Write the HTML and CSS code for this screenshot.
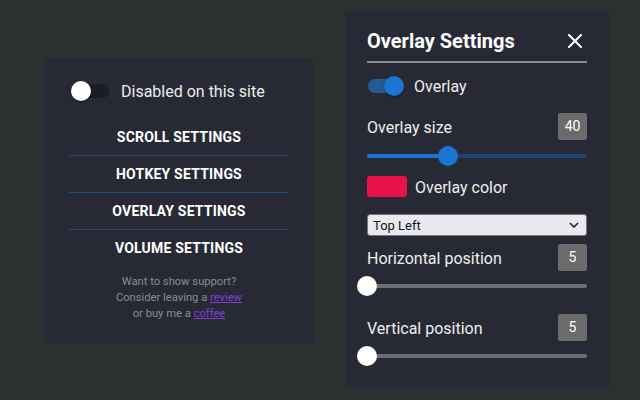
FILE: index.html
```html
<!DOCTYPE html>
<html lang="en">
<head>
    <meta charset="UTF-8">
    <title>Overlay Settings</title>
    <link rel="stylesheet" href="styles.css">
</head>
<body>
    <div class="popup">
        <div class="site-toggle">
            <span class="switch switch-off"><span class="knob"></span></span>
            <span class="site-label">Disabled on this site</span>
        </div>

        <div class="menu">
            <div class="menu-item">SCROLL SETTINGS</div>
            <div class="menu-item">HOTKEY SETTINGS</div>
            <div class="menu-item">OVERLAY SETTINGS</div>
            <div class="menu-item">VOLUME SETTINGS</div>
        </div>

        <p class="support">
            Want to show support?<br>
            Consider leaving a <a href="#">review</a><br>
            or buy me a <a href="#">coffee</a>
        </p>
    </div>

    <div class="settings">
        <div class="settings-head">
            <h2>Overlay Settings</h2>
            <svg class="close" width="14" height="14" viewBox="0 0 14 14">
                <path d="M1 1L13 13M13 1L1 13" stroke="#fff" stroke-width="2" stroke-linecap="square"/>
            </svg>
        </div>

        <div class="row toggle-row">
            <span class="switch switch-on"><span class="knob"></span></span>
            <span class="label">Overlay</span>
        </div>

        <div class="row value-row first">
            <span class="label">Overlay size</span>
            <span class="badge">40</span>
        </div>
        <div class="slider">
            <div class="track blue">
                <div class="fill" style="width: 37%"></div>
                <div class="thumb blue-thumb" style="left: 37%"></div>
            </div>
        </div>

        <div class="row color-row">
            <span class="swatch"></span>
            <span class="label">Overlay color</span>
        </div>

        <div class="select">
            <span>Top Left</span>
            <svg width="10" height="6" viewBox="0 0 10 6">
                <path d="M1 1L5 5L9 1" stroke="#222" stroke-width="1.6" fill="none"/>
            </svg>
        </div>

        <div class="row value-row">
            <span class="label">Horizontal position</span>
            <span class="badge">5</span>
        </div>
        <div class="slider">
            <div class="track grey">
                <div class="thumb" style="left: 0%"></div>
            </div>
        </div>

        <div class="row value-row spaced">
            <span class="label">Vertical position</span>
            <span class="badge">5</span>
        </div>
        <div class="slider">
            <div class="track grey">
                <div class="thumb" style="left: 0%"></div>
            </div>
        </div>
    </div>
</body>
</html>
```

FILE: styles.css
```css
* {
    margin: 0;
    padding: 0;
    box-sizing: border-box;
    font-family: Roboto, "Liberation Sans", sans-serif;
}

body {
    background: #2c3130;
    display: flex;
    align-items: flex-start;
    gap: 32px;
    padding: 11px 0 0 44px;
    height: 400px;
    overflow: hidden;
}

/* left popup */

.popup {
    background: #272a34;
    width: 269px;
    height: 286px;
    margin-top: 47px;
    padding: 21px 24px 0 25px;
}

.site-toggle {
    display: flex;
    align-items: center;
    height: 24px;
    padding-left: 2px;
}

.site-label {
    color: #ececec;
    font-size: 16px;
    margin-left: 12px;
}

.switch {
    position: relative;
    display: inline-block;
    width: 34px;
    height: 14px;
    border-radius: 7px;
}

.switch .knob {
    position: absolute;
    top: -3px;
    width: 20px;
    height: 20px;
    border-radius: 50%;
    box-shadow: 0 1px 2px rgba(0,0,0,0.4);
}

.switch-off {
    background: #1b1d22;
    margin-left: 4px;
}

.switch-off .knob {
    left: -4px;
    background: #fff;
}

.switch-on {
    background: #255a94;
}

.switch-on .knob {
    left: 16px;
    background: #1a76d2;
}

.menu {
    margin-top: 16px;
}

.menu-item {
    height: 37px;
    line-height: 36px;
    text-align: center;
    color: #fff;
    font-size: 14px;
    font-weight: bold;
    letter-spacing: 0.2px;
    border-bottom: 1px solid #1f4e80;
}

.menu-item:last-child {
    border-bottom: none;
}

.support {
    margin-top: 7px;
    text-align: center;
    color: #8a8b90;
    font-size: 11.2px;
    line-height: 16px;
}

.support a {
    color: #7d3ed6;
}

/* right settings panel */

.settings {
    background: #272a34;
    width: 264px;
    height: 377px;
    padding: 18px 22px 0 22px;
}

.settings-head {
    display: flex;
    justify-content: space-between;
    align-items: center;
    height: 24px;
    padding-bottom: 8px;
    border-bottom: 2px solid #8b8c90;
    box-sizing: content-box;
}

.settings-head h2 {
    color: #fff;
    font-size: 20px;
    font-weight: bold;
}

.close {
    margin-right: 5px;
}

.row {
    display: flex;
    align-items: center;
}

.label {
    color: #eeeeee;
    font-size: 16px;
    padding-top: 1px;
}

.toggle-row {
    height: 24px;
    margin-top: 11px;
    padding-left: 1px;
}

.toggle-row .label {
    margin-left: 12px;
}

.value-row {
    justify-content: space-between;
    margin-top: 8px;
}

.value-row.first {
    margin-top: 15px;
}

.value-row.spaced {
    margin-top: 18px;
}

.badge {
    background: #6b6b6b;
    color: #fff;
    font-size: 14px;
    width: 29px;
    height: 27px;
    line-height: 27px;
    text-align: center;
    border-radius: 2px;
}

.slider {
    height: 20px;
    margin-top: 5px;
    display: flex;
    align-items: center;
}

.value-row.first + .slider {
    margin-top: 6px;
}

.track {
    position: relative;
    width: 100%;
    height: 4px;
    border-radius: 2px;
}

.track.blue {
    background: #1e4675;
}

.track.grey {
    background: #6d6e76;
}

.fill {
    height: 100%;
    background: #1a76d2;
    border-radius: 2px;
}

.thumb {
    position: absolute;
    top: -8px;
    width: 20px;
    height: 20px;
    margin-left: -10px;
    border-radius: 50%;
    background: #fff;
}

.blue-thumb {
    background: #1a76d2;
}

.color-row {
    margin-top: 10px;
    height: 21px;
}

.swatch {
    width: 40px;
    height: 21px;
    border-radius: 3px;
    background: #e8124b;
}

.color-row .label {
    margin-left: 8px;
}

.select {
    margin-top: 17px;
    height: 22px;
    background: #e9e9ef;
    border: 1px solid #767676;
    border-radius: 3px;
    display: flex;
    justify-content: space-between;
    align-items: center;
    padding: 0 7px 0 5px;
    color: #111;
    font-size: 13px;
}
```
